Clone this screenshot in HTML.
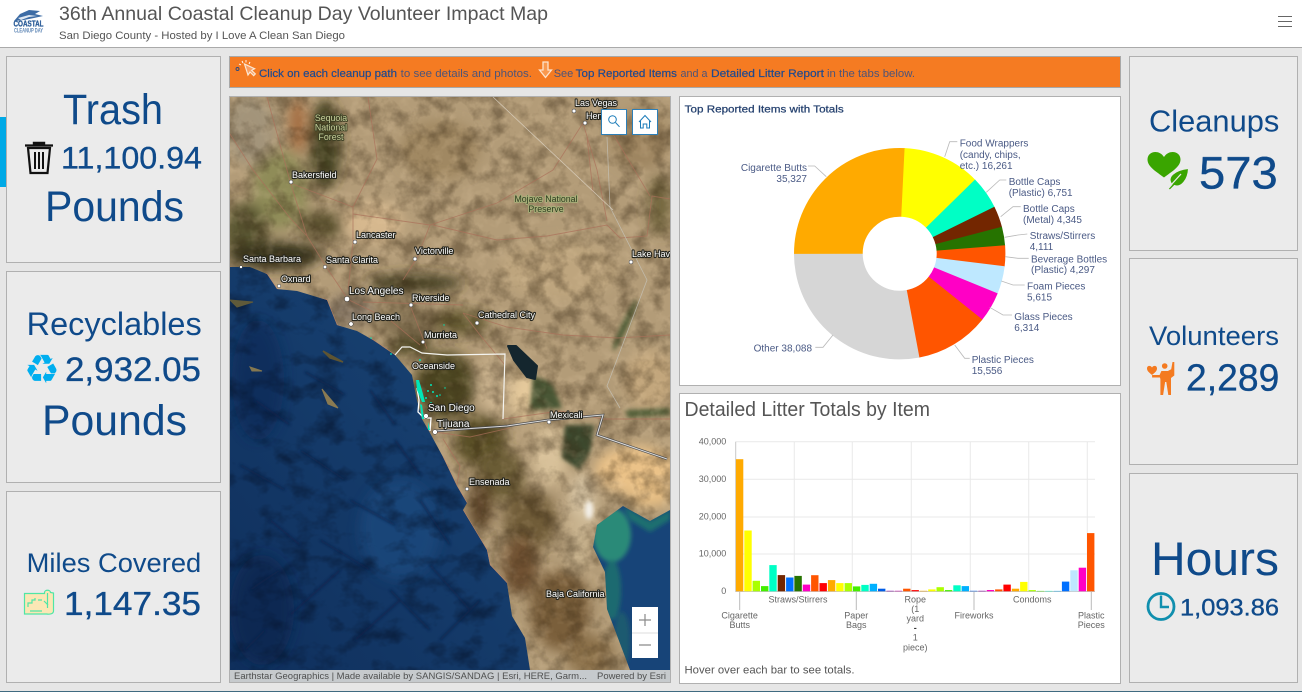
<!DOCTYPE html>
<html lang="en"><head><meta charset="utf-8"><title>36th Annual Coastal Cleanup Day Volunteer Impact Map</title>
<style>
html,body{margin:0;padding:0;width:1302px;height:692px;overflow:hidden;background:#e6e6e6;font-family:"Liberation Sans",sans-serif}
#root{position:relative;width:1302px;height:692px;overflow:hidden}
.a{position:absolute;box-sizing:border-box}
.p{background:#ebebeb;border:1px solid #b0b0b0}
.w{background:#fff;border:1px solid #b0b0b0}
svg{position:absolute;left:0;top:0;display:block;overflow:hidden}
.k{fill:#0f4a8a}
.n{fill:#0f4a8a;stroke:#0f4a8a;stroke-width:.35}
.l{font-size:10px;fill:#4a5a85}
.ax{font-size:9px;fill:#666}
.c{font-size:9px;fill:#fff;stroke:#26261e;stroke-width:2.2px;paint-order:stroke;stroke-linejoin:round}
.b{fill:#1f4a8f;font-size:11px;stroke:#1f4a8f;stroke-width:.2}
.r{fill:#4d5478;font-size:11px}
</style></head><body><div id="root">
<div class="a" style="left:0;top:0;width:1302px;height:48px;background:#fff;border-bottom:1px solid #aaa"></div>
<div class="a" style="left:0;top:117px;width:7px;height:70px;background:#00a9e6"></div>
<div class="a p" style="left:6px;top:56px;width:215px;height:207px"></div>
<div class="a p" style="left:6px;top:271px;width:215px;height:212px"></div>
<div class="a p" style="left:6px;top:491px;width:215px;height:192px"></div>
<div class="a p" style="left:1129px;top:56px;width:169px;height:195px"></div>
<div class="a p" style="left:1129px;top:258px;width:169px;height:207px"></div>
<div class="a p" style="left:1129px;top:473px;width:169px;height:210px"></div>
<div class="a" style="left:229px;top:56px;width:892px;height:32px;background:#f57b22;border:1px solid #a8a8a8"></div>
<div class="a w" style="left:229px;top:96px;width:442px;height:587px"></div>
<div class="a w" style="left:679px;top:96px;width:442px;height:290px"></div>
<div class="a w" style="left:679px;top:393px;width:442px;height:291px"></div>
<div class="a" style="left:0;top:691px;width:1302px;height:1px;background:#3f6a80"></div>

<svg width="1302" height="692" viewBox="0 0 1302 692" xmlns="http://www.w3.org/2000/svg" font-family="'Liberation Sans',sans-serif">
<defs>
<clipPath id="mc"><rect x="230" y="97" width="440" height="573"/></clipPath>
<filter id="bl" x="-30%" y="-30%" width="160%" height="160%"><feGaussianBlur stdDeviation="6"/></filter>
<filter id="bs" x="-30%" y="-30%" width="160%" height="160%"><feGaussianBlur stdDeviation="2"/></filter>
<filter id="bt" x="-10%" y="-10%" width="120%" height="120%"><feGaussianBlur stdDeviation="1.4"/></filter>
<filter id="nz" x="0" y="0" width="100%" height="100%" color-interpolation-filters="sRGB"><feTurbulence type="fractalNoise" baseFrequency=".055" numOctaves="4" seed="7"/><feColorMatrix values="0 0 0 0 .22 0 0 0 0 .16 0 0 0 0 .08 2.8 0 0 0 -1.15"/></filter>
<filter id="nf" x="0" y="0" width="100%" height="100%" color-interpolation-filters="sRGB"><feTurbulence type="fractalNoise" baseFrequency=".08" numOctaves="3" seed="3"/><feColorMatrix values="0 0 0 0 .95 0 0 0 0 .85 0 0 0 0 .7 0 2.6 0 0 -1.25"/></filter>
<filter id="no" x="0" y="0" width="100%" height="100%" color-interpolation-filters="sRGB"><feTurbulence type="fractalNoise" baseFrequency=".035 .045" numOctaves="4" seed="11"/><feColorMatrix values="0 0 0 0 .02 0 0 0 0 .07 0 0 0 0 .16 3 0 0 0 -1.45"/></filter>
<linearGradient id="oc" x1="1" y1="0" x2="0" y2="1"><stop offset="0" stop-color="#174473"/><stop offset=".5" stop-color="#174070"/><stop offset="1" stop-color="#0f2f5c"/></linearGradient>
<clipPath id="lc"><path d="M230 267L250 267 267 274 277 289 297 291 327 300 337 325 357 331 373 340 395 355 412 375 417 400 422 419 430 433 443 457 457 486 467 503 463 510 487 550 490 565 507 583 512 616 525 638 530 670 630 670 607 609 605 572 593 547 597 525 623 506 650 521 670 510 670 97 230 97Z"/></clipPath>
<clipPath id="gc"><path d="M670 510L650 521 623 506 597 525 593 547 605 572 607 609 630 670 670 670Z"/></clipPath>
</defs>

<!-- header -->
<g>
<path d="M14 21L20 14 29 10 40 11 35 14 43 16 34 18 24 20Z" fill="#3d6ca5"/>
<path d="M18 18L29 15 37 16 29 17 21 20Z" fill="#dfe8f2"/>
<text x="13.500" y="26.500" font-size="8" font-weight="bold" fill="#2a5c98" stroke="#2a5c98" stroke-width=".3" textLength="30" lengthAdjust="spacingAndGlyphs">COASTAL</text>
<text x="14" y="32.500" font-size="6" font-weight="bold" fill="#5f87b6" textLength="29" lengthAdjust="spacingAndGlyphs">CLEANUP DAY</text>
<text x="59" y="20" font-size="19.500" fill="#555" textLength="489" lengthAdjust="spacingAndGlyphs">36th Annual Coastal Cleanup Day Volunteer Impact Map</text>
<text x="59" y="39" font-size="11" fill="#555" textLength="286" lengthAdjust="spacingAndGlyphs">San Diego County - Hosted by I Love A Clean San Diego</text>
<path d="M1278 16.500h14M1278 21.500h14M1278 26.500h14" stroke="#666" stroke-width="1.100"/>
</g>

<!-- left KPIs -->
<text class="k" x="63" y="124" font-size="43" textLength="100" lengthAdjust="spacingAndGlyphs">Trash</text>
<text class="n" x="61" y="168.300" font-size="31.500" textLength="141" lengthAdjust="spacingAndGlyphs">11,100.94</text>
<text class="k" x="45" y="221" font-size="43" textLength="139" lengthAdjust="spacingAndGlyphs">Pounds</text>
<text class="k" x="26.700" y="335" font-size="32" textLength="175" lengthAdjust="spacingAndGlyphs">Recyclables</text>
<text class="n" x="65" y="381" font-size="34" textLength="136" lengthAdjust="spacingAndGlyphs">2,932.05</text>
<text class="k" x="42" y="435" font-size="43" textLength="145" lengthAdjust="spacingAndGlyphs">Pounds</text>
<text class="k" x="26.700" y="572" font-size="27" textLength="174.500" lengthAdjust="spacingAndGlyphs">Miles Covered</text>
<text class="n" x="64" y="615" font-size="33" textLength="137" lengthAdjust="spacingAndGlyphs">1,147.35</text>
<!-- trash icon -->
<g fill="none" stroke="#111">
<path d="M25 145.500h28" stroke-width="2.200"/><path d="M33.500 144.500v-2h11v2" fill="#111" stroke-width="1.400"/>
<path d="M28 148l2.500 25h17l2.500-25z" stroke-width="2.200"/>
<path d="M35 152v17M39 152v17M43 152v17" stroke-width="2"/>
</g>
<!-- recycle icon -->
<text x="24" y="383" font-size="40" fill="#00aeef" font-family="'DejaVu Sans',sans-serif">♻</text>
<!-- map icon -->
<g stroke="#4fe6a6" stroke-width="1.200" fill="#fbe7b5">
<path d="M24.500 593.500h20v-1c0-3 6-3 6 0l3 .5v18c0 3-4 3.500-7 3h-22z"/>
<path d="M28 607v-4h4v-3h3v-2M30 611h12M44 601l4 4M38 600h4" fill="none"/>
<path d="M47.500 593v15" fill="none"/>
</g>

<!-- banner -->
<g stroke="#fff" fill="none" stroke-width="1.200">
<path d="M244.500 64l3.500 11 2-3 3.700 3.600 1.600-1.700-3.700-3.500 3-1.700z" stroke="#fbe7d3" fill="#f9a066"/>
<path d="M242 61l1 2M246 60v2.500M239 64l2 1M250 62l-1 2" stroke-width=".9"/>
<circle cx="237.500" cy="69" r="1.500" stroke-width=".9" stroke="#2c4a80"/>
<path d="M543 62h5v8h3.500l-6 7.500-6-7.500h3.500z" stroke="#fde3cc" stroke-width="1.300" fill="#f9994f"/>
</g>
<text class="b" x="259" y="77" textLength="138" lengthAdjust="spacingAndGlyphs">Click on each cleanup path</text>
<text class="r" x="400.700" y="77" textLength="131.300" lengthAdjust="spacingAndGlyphs">to see details and photos.</text>
<text class="r" x="553.700" y="77">See</text>
<text class="b" x="575.700" y="77" textLength="101.300" lengthAdjust="spacingAndGlyphs">Top Reported Items</text>
<text class="r" x="680.500" y="77" textLength="27" lengthAdjust="spacingAndGlyphs">and a</text>
<text class="b" x="711" y="77" textLength="113" lengthAdjust="spacingAndGlyphs">Detailed Litter Report</text>
<text class="r" x="827" y="77" textLength="88" lengthAdjust="spacingAndGlyphs">in the tabs below.</text>

<!-- map -->
<g clip-path="url(#mc)">
<rect x="230" y="97" width="440" height="573" fill="url(#oc)"/>
<ellipse cx="262" cy="610" rx="32" ry="55" fill="#0c2850" opacity=".8" filter="url(#bl)"/>
<ellipse cx="258" cy="380" rx="26" ry="60" fill="#0d2c58" opacity=".7" filter="url(#bl)"/>
<ellipse cx="400" cy="530" rx="40" ry="50" fill="#1e4c80" opacity=".7" filter="url(#bl)"/>
<rect x="230" y="267" width="300" height="403" filter="url(#no)" opacity=".55"/>
<g fill="none" stroke="#08204a" stroke-width="2.400" filter="url(#bt)" opacity=".75">
<path d="M255 400L290 425M305 372L345 395M370 390L395 425M395 440L420 475M240 465L285 490M300 450L345 480M350 500L395 525M420 500L450 545M270 520L300 545M320 540L370 570M430 565L470 610M390 590L430 630M250 590L280 570M290 615L340 570M355 640L400 600M440 640L480 600M245 650L265 630"/>
</g>
<g clip-path="url(#gc)">
<rect x="590" y="500" width="80" height="170" fill="#174478"/>
<g filter="url(#bs)">
<ellipse cx="612" cy="535" rx="19" ry="27" fill="#2b8a78"/>
<ellipse cx="612" cy="590" rx="9" ry="30" fill="#1d6a70"/>
<ellipse cx="622" cy="640" rx="8" ry="28" fill="#1a5a70"/>
<path d="M623 506L650 521 670 510 670 520 650 532 630 520Z" fill="#1f7070"/>
</g>
</g>
<g clip-path="url(#lc)">
<rect x="230" y="97" width="440" height="573" fill="#b39c78"/>
<g filter="url(#bl)">
<ellipse cx="250" cy="130" rx="25" ry="35" fill="#a3947a"/>
<ellipse cx="280" cy="190" rx="28" ry="40" fill="#8f8c58"/>
<ellipse cx="298" cy="125" rx="9" ry="28" fill="#a56e42"/>
<ellipse cx="325" cy="145" rx="16" ry="45" fill="#454323"/>
<ellipse cx="245" cy="230" rx="22" ry="28" fill="#5a5733"/>
<ellipse cx="275" cy="255" rx="48" ry="14" fill="#39341a"/>
<ellipse cx="322" cy="225" rx="24" ry="14" fill="#5e5432"/>
<ellipse cx="373" cy="222" rx="30" ry="20" fill="#d6b88e"/>
<ellipse cx="415" cy="283" rx="48" ry="9" fill="#423c20"/>
<ellipse cx="350" cy="310" rx="24" ry="16" fill="#8a7a68"/>
<ellipse cx="405" cy="320" rx="36" ry="14" fill="#806e50"/>
<ellipse cx="460" cy="322" rx="28" ry="12" fill="#60562f"/>
<ellipse cx="445" cy="385" rx="30" ry="34" fill="#4e4622"/>
<ellipse cx="410" cy="345" rx="22" ry="10" fill="#4c4524"/>
<ellipse cx="495" cy="385" rx="14" ry="28" fill="#d2ba94"/>
<ellipse cx="525" cy="395" rx="14" ry="26" fill="#e6ca9c"/>
<ellipse cx="480" cy="440" rx="26" ry="26" fill="#5a5028"/>
<ellipse cx="500" cy="475" rx="24" ry="26" fill="#6a5b34"/>
<ellipse cx="530" cy="520" rx="26" ry="30" fill="#6f5c38"/>
<ellipse cx="480" cy="505" rx="12" ry="26" fill="#5e472b"/>
<ellipse cx="550" cy="455" rx="18" ry="30" fill="#d8c19a"/>
<ellipse cx="582" cy="505" rx="13" ry="32" fill="#dcc9a8"/>
<ellipse cx="578" cy="540" rx="12" ry="30" fill="#c9b48f"/>
<ellipse cx="520" cy="565" rx="18" ry="30" fill="#6f5130"/>
<ellipse cx="560" cy="610" rx="30" ry="40" fill="#7a5e3a"/>
<ellipse cx="590" cy="655" rx="24" ry="20" fill="#8a7048"/>
<ellipse cx="635" cy="470" rx="40" ry="24" fill="#ebc288"/>
<ellipse cx="650" cy="495" rx="22" ry="12" fill="#e8bf84"/>
<ellipse cx="650" cy="380" rx="26" ry="30" fill="#c2a67c"/>
<ellipse cx="660" cy="205" rx="12" ry="30" fill="#746840"/>
<ellipse cx="560" cy="270" rx="60" ry="30" fill="#bea57e"/>
<ellipse cx="440" cy="150" rx="40" ry="30" fill="#a08862"/>
<ellipse cx="640" cy="140" rx="30" ry="30" fill="#9e8560"/>
</g>
<g filter="url(#bs)">
<path d="M533 375L552 383 562 408 530 410Z" fill="#4a5735"/>
<path d="M565 425L595 425 590 452 580 470 562 458Z" fill="#3d4a2e"/>
<path d="M625 410L670 408 670 415 628 418Z" fill="#55603a"/>
<ellipse cx="625" cy="325" rx="3.500" ry="28" fill="#55603a" transform="rotate(25 625 325)"/>
</g>
<rect x="230" y="97" width="440" height="573" filter="url(#nz)" opacity=".4"/>
<rect x="230" y="97" width="440" height="573" filter="url(#nf)" opacity=".18"/>
<ellipse cx="589" cy="510" rx="4" ry="9" fill="#f4f1ea" filter="url(#bs)"/>
<g fill="none" stroke="#ab705a" stroke-width=".9" opacity=".7">
<path d="M267 97L290 181 307 236 325 265 347 298"/>
<path d="M290 183L353 207 353 243 348 291"/>
<path d="M353 214L430 225 497 203 553 170 583 123"/>
<path d="M430 225L417 258 403 280"/>
<path d="M433 225L497 240 547 236 607 225 620 238 647 236 652 196 670 199"/>
<path d="M583 123L597 170 607 221M613 134L650 196M587 137L593 192"/>
<path d="M463 313L507 327 563 335 617 338 670 335"/>
<path d="M363 302L463 305M410 305L427 349M345 298L390 320 420 345"/>
<path d="M503 419L560 411 603 419 670 419"/>
<path d="M443 439L460 466 457 484M435 432L470 437 510 428"/>
<path d="M230 134L253 170 290 218 307 236"/>
<path d="M368 97L377 159 353 207"/>
<path d="M463 313L480 335 505 365"/>
</g>
<path d="M607 137L610 207 647 280 607 386 620 408" fill="none" stroke="#c8c8c0" stroke-width=".8" opacity=".7"/>
<path d="M493 97L613 210" fill="none" stroke="#e4ddd0" stroke-width=".8" opacity=".7"/>
<path d="M230 267L267 274 277 289 327 300 337 325 373 340 395 355M443 457L457 486 467 503M463 510L487 550 490 565 507 583" fill="none" stroke="#c9836a" stroke-width="1.100" opacity=".7"/>
</g>
<path d="M508 346L516 346 537 366 535 379 527 377 514 360Z" fill="#14262e" stroke="#14262e" stroke-width="2" stroke-linejoin="round"/>
<path d="M230 300L253 302 237 307Z" fill="#5f5a3a" stroke="#5f5a3a" stroke-width="1"/>
<path d="M323 351L343 362 330 358Z" fill="#5f5532" stroke="#5f5532" stroke-width="1.500"/>
<path d="M250 367L262 371 252 371Z" fill="#857850" stroke="#857850" stroke-width="1"/>
<path d="M322 389L338 408 328 404Z" fill="#897a52" stroke="#897a52"/>
<path d="M395 355L402 347 410 347 422 353 447 355 505 354 503 419" fill="none" stroke="#f4f4f0" stroke-width="1.200"/>
<path d="M435 431L507 426 548 420 603 415 597 435 667 459" fill="none" stroke="#4a4a4a" stroke-width="2.400"/>
<path d="M435 431L507 426 548 420 603 415 597 435 667 459" fill="none" stroke="#d8d8d8" stroke-width="1.100"/>
<path d="M417 388L419 400 418 412 424 418 431 418 430 431" fill="none" stroke="#fff" stroke-width="1.300"/>
<g fill="#00e6b8">
<path d="M416 380l3 0 4 14 2 8-3 0-5-12zM420 404l2 1 2 14-2 0zM428 422l2 8-2 0z"/>
<circle cx="420" cy="360" r="1"/><circle cx="421" cy="364" r="1"/><circle cx="431" cy="385" r="1"/><circle cx="433" cy="392" r="1"/><circle cx="428" cy="391" r="1"/><circle cx="437" cy="396" r="1"/><circle cx="440" cy="395" r=".8"/><circle cx="426" cy="398" r="1"/><circle cx="431" cy="403" r="1"/><circle cx="371" cy="338" r=".8"/><circle cx="391" cy="354" r=".9"/><circle cx="444" cy="325" r=".7"/><circle cx="445" cy="388" r=".7"/>
</g>
<g fill="#fff" stroke="#333" stroke-width=".5">
<circle cx="574" cy="111" r="2"/><circle cx="585" cy="123" r="2"/><circle cx="291" cy="182" r="2"/><circle cx="355" cy="242" r="2"/><circle cx="415" cy="259" r="2"/><circle cx="325" cy="267" r="1.800"/><circle cx="241" cy="267" r="1.500"/><circle cx="279" cy="286" r="1.800"/><circle cx="347" cy="299" r="2.600"/><circle cx="411" cy="305" r="2"/><circle cx="351" cy="324" r="2.200"/><circle cx="477" cy="323" r="2"/><circle cx="423" cy="342" r="1.800"/><circle cx="631" cy="262" r="2"/><circle cx="426" cy="416" r="2.400"/><circle cx="435" cy="432" r="2.400"/><circle cx="549" cy="422" r="2"/><circle cx="467" cy="489" r="1.800"/>
</g>
<g text-anchor="middle" font-size="8.800" fill="#c9d29c" stroke="#3a3d22" stroke-width="1.800" paint-order="stroke" stroke-linejoin="round">
<text x="331" y="121">Sequoia</text><text x="331" y="130.500">National</text><text x="331" y="140">Forest</text>
</g>
<g text-anchor="middle" font-size="8.800" fill="#2f3a1f" stroke="#a8b27a" stroke-width="1.800" paint-order="stroke" stroke-linejoin="round">
<text x="546" y="202">Mojave National</text><text x="546" y="212">Preserve</text>
</g>
<text class="c" x="575" y="106">Las Vegas</text><text class="c" x="586" y="119">Hen</text>
<text class="c" x="292" y="178">Bakersfield</text><text class="c" x="356" y="238">Lancaster</text>
<text class="c" x="415" y="254">Victorville</text><text class="c" x="326" y="263">Santa Clarita</text>
<text class="c" x="243" y="262">Santa Barbara</text><text class="c" x="281" y="282">Oxnard</text>
<text class="c" x="349" y="294" style="font-size:10px">Los Angeles</text><text class="c" x="412" y="301">Riverside</text>
<text class="c" x="352" y="320">Long Beach</text><text class="c" x="478" y="318">Cathedral City</text>
<text class="c" x="424" y="338">Murrieta</text><text class="c" x="632" y="257">Lake Hava</text>
<text class="c" x="412" y="369">Oceanside</text><text class="c" x="428" y="411" style="font-size:10px">San Diego</text>
<text class="c" x="437" y="427" style="font-size:10px">Tijuana</text><text class="c" x="550" y="418">Mexicali</text>
<text class="c" x="469" y="485">Ensenada</text><text class="c" x="546" y="597">Baja California</text>
<g fill="#fff" stroke="#2d7fb8"><rect x="601.500" y="109.500" width="25" height="25"/><rect x="632.500" y="109.500" width="25" height="25"/></g>
<g fill="none" stroke="#1b7bb8" stroke-width="1">
<circle cx="612.500" cy="119.500" r="3.800"/><path d="M615.500 122.500l4 4.300"/>
<path d="M639 122l6-6.500 6 6.500M640.500 121v7h2.700v-4h3.600v4h2.700v-7"/>
</g>
<rect x="632" y="607" width="26" height="51" fill="#fff"/>
<path d="M632 633h26" stroke="#ddd"/>
<path d="M639 620h12M645 614v12M639 645h12" stroke="#8a8a8a" stroke-width="1.200"/>
</g>
<rect x="230" y="670" width="440" height="12" fill="#c6cacd"/>
<text x="234" y="679" font-size="9" fill="#4f5050" textLength="353" lengthAdjust="spacingAndGlyphs">Earthstar Geographics | Made available by SANGIS/SANDAG | Esri, HERE, Garm...</text>
<text x="597" y="679" font-size="9" fill="#4f5050" textLength="69" lengthAdjust="spacingAndGlyphs">Powered by Esri</text>

<!-- pie -->
<text x="684.700" y="112.300" font-size="10.500" fill="#24406e" stroke="#24406e" stroke-width=".25" textLength="159" lengthAdjust="spacingAndGlyphs">Top Reported Items with Totals</text>
<g fill="none" stroke-width="68.700">
<circle cx="899.700" cy="253.700" r="71.350" pathLength="360" stroke="#ffaa00" stroke-dasharray="93 267" transform="rotate(180 899.700 253.700)"/>
<circle cx="899.700" cy="253.700" r="71.350" pathLength="360" stroke="#ffff00" stroke-dasharray="42.800 317.200" transform="rotate(-87 899.700 253.700)"/>
<circle cx="899.700" cy="253.700" r="71.350" pathLength="360" stroke="#00ffc5" stroke-dasharray="18.200 341.800" transform="rotate(-44.200 899.700 253.700)"/>
<circle cx="899.700" cy="253.700" r="71.350" pathLength="360" stroke="#732600" stroke-dasharray="11.600 348.400" transform="rotate(-26 899.700 253.700)"/>
<circle cx="899.700" cy="253.700" r="71.350" pathLength="360" stroke="#267300" stroke-dasharray="10.200 349.800" transform="rotate(-14.400 899.700 253.700)"/>
<circle cx="899.700" cy="253.700" r="71.350" pathLength="360" stroke="#ff5500" stroke-dasharray="11.400 348.600" transform="rotate(-4.200 899.700 253.700)"/>
<circle cx="899.700" cy="253.700" r="71.350" pathLength="360" stroke="#bee8ff" stroke-dasharray="15.200 344.800" transform="rotate(7.200 899.700 253.700)"/>
<circle cx="899.700" cy="253.700" r="71.350" pathLength="360" stroke="#ff00c5" stroke-dasharray="16.500 343.500" transform="rotate(22.400 899.700 253.700)"/>
<circle cx="899.700" cy="253.700" r="71.350" pathLength="360" stroke="#ff5500" stroke-dasharray="40.700 319.300" transform="rotate(38.900 899.700 253.700)"/>
<circle cx="899.700" cy="253.700" r="71.350" pathLength="360" stroke="#d6d6d6" stroke-dasharray="100.400 259.600" transform="rotate(79.600 899.700 253.700)"/>
</g>
<g fill="none" stroke="#b9b9b9" stroke-width=".8">
<path d="M944.700 156.700L949.700 141.700H957.300M826.300 176.700L814.700 166H808M986.300 192.300L999.700 180H1006.300M1000.700 216.700L1013 206.700H1020.700M1004.700 237.300L1018 235 1027.300 234M1005.300 256.700L1018 258.300H1028.700M1001.300 281L1013 285H1024.700M989.700 307.300L1003 315H1012M954.700 345L964.700 358.300H969.700M833 335L823 347.300H815.300"/>
</g>
<text class="l" x="959.700" y="146.700">Food Wrappers</text><text class="l" x="959.700" y="158">(candy, chips,</text><text class="l" x="959.700" y="169">etc.) 16,261</text>
<text class="l" x="807" y="171" text-anchor="end">Cigarette Butts</text><text class="l" x="807" y="182" text-anchor="end">35,327</text>
<text class="l" x="1008.700" y="185">Bottle Caps</text><text class="l" x="1008.700" y="196">(Plastic) 6,751</text>
<text class="l" x="1023" y="212">Bottle Caps</text><text class="l" x="1023" y="223">(Metal) 4,345</text>
<text class="l" x="1029.700" y="239">Straws/Stirrers</text><text class="l" x="1029.700" y="250">4,111</text>
<text class="l" x="1031" y="262.700">Beverage Bottles</text><text class="l" x="1031" y="273">(Plastic) 4,297</text>
<text class="l" x="1027" y="289.700">Foam Pieces</text><text class="l" x="1027" y="300.700">5,615</text>
<text class="l" x="1014.300" y="320">Glass Pieces</text><text class="l" x="1014.300" y="331">6,314</text>
<text class="l" x="971.700" y="363">Plastic Pieces</text><text class="l" x="971.700" y="374">15,556</text>
<text class="l" x="812" y="351.700" text-anchor="end">Other 38,088</text>

<!-- bar chart -->
<text x="684.500" y="416" font-size="20" fill="#555" textLength="245.500" lengthAdjust="spacingAndGlyphs">Detailed Litter Totals by Item</text>
<text x="684.500" y="673.300" font-size="11" fill="#555" textLength="170" lengthAdjust="spacingAndGlyphs">Hover over each bar to see totals.</text>
<g stroke="#e9e9e9" stroke-width="1">
<path d="M735.700 441.700H1095M735.700 479.300H1095M735.700 517H1095M735.700 554H1095"/>
<path d="M794.300 441.700V591M852.300 441.700V591M911.300 441.700V591M970.300 441.700V591M1028.700 441.700V591M1087.300 441.700V591"/>
</g>
<path d="M735.700 441.700V591.500H1095" fill="none" stroke="#c8c8c8"/>
<path d="M739.700 592V610M856.300 592V610M974 592V610M1091.300 592V610" stroke="#bbb"/>
<g transform="translate(0 591.300) scale(1 -1)">
<rect x="735.900" width="7.400" height="132.100" fill="#ffaa00"/>
<rect x="744.300" width="7.400" height="60.800" fill="#ffff00"/>
<rect x="752.600" width="7.400" height="10.500" fill="#aaff00"/>
<rect x="761" width="7.400" height="5.200" fill="#44ee00"/>
<rect x="769.300" width="7.400" height="26.200" fill="#00ffc5"/>
<rect x="777.700" width="7.400" height="16.200" fill="#732600"/>
<rect x="786.100" width="7.400" height="13.800" fill="#0070ff"/>
<rect x="794.400" width="7.400" height="15.400" fill="#267300"/>
<rect x="802.800" width="7.400" height="6.700" fill="#ff00c5"/>
<rect x="811.100" width="7.400" height="16.100" fill="#ff5500"/>
<rect x="819.500" width="7.400" height="8.200" fill="#ff0000"/>
<rect x="827.900" width="7.400" height="11.200" fill="#ffaa00"/>
<rect x="836.200" width="7.400" height="8.200" fill="#ffff00"/>
<rect x="844.600" width="7.400" height="8.200" fill="#aaff00"/>
<rect x="852.900" width="7.400" height="4.900" fill="#44ee00"/>
<rect x="861.300" width="7.400" height="6.400" fill="#00ffc5"/>
<rect x="869.700" width="7.400" height="7.500" fill="#00b0ff"/>
<rect x="878" width="7.400" height="2.600" fill="#005ce6"/>
<rect x="886.400" width="7.400" height=".5" fill="#8400a8"/>
<rect x="894.700" width="7.400" height=".5" fill="#c500a8"/>
<rect x="903.100" width="7.400" height="2.600" fill="#ff5500"/>
<rect x="911.500" width="7.400" height="1.200" fill="#ff0000"/>
<rect x="919.800" width="7.400" height=".5" fill="#ffaa00"/>
<rect x="928.200" width="7.400" height="1.900" fill="#ffff00"/>
<rect x="936.500" width="7.400" height="4.100" fill="#aaff00"/>
<rect x="944.900" width="7.400" height="1.200" fill="#44ee00"/>
<rect x="953.300" width="7.400" height="6" fill="#00ffc5"/>
<rect x="961.600" width="7.400" height="5.200" fill="#00b0ff"/>
<rect x="970" width="7.400" height=".5" fill="#005ce6"/>
<rect x="978.300" width="7.400" height=".5" fill="#8400a8"/>
<rect x="986.700" width="7.400" height="1.300" fill="#ff00c5"/>
<rect x="995.100" width="7.400" height="1.900" fill="#ff5500"/>
<rect x="1003.400" width="7.400" height="6.700" fill="#ff0000"/>
<rect x="1011.800" width="7.400" height="2.600" fill="#ffaa00"/>
<rect x="1020.100" width="7.400" height="9.400" fill="#ffff00"/>
<rect x="1028.500" width="7.400" height="1.200" fill="#aaff00"/>
<rect x="1036.900" width="7.400" height=".4" fill="#44ee00"/>
<rect x="1045.200" width="7.400" height=".4" fill="#00ffc5"/>
<rect x="1053.600" width="7.400" height=".4" fill="#00b0ff"/>
<rect x="1061.900" width="7.400" height="9.700" fill="#0070ff"/>
<rect x="1070.300" width="7.400" height="21" fill="#bee8ff"/>
<rect x="1078.700" width="7.400" height="23.600" fill="#ff00c5"/>
<rect x="1087" width="7.400" height="58.200" fill="#ff5500"/>
</g>
<g text-anchor="end">
<text x="726.300" y="444.300" class="ax">40,000</text><text x="726.300" y="482" class="ax">30,000</text><text x="726.300" y="519.700" class="ax">20,000</text><text x="726.300" y="556.700" class="ax">10,000</text><text x="726.300" y="594" class="ax">0</text>
</g>
<g text-anchor="middle">
<text class="ax" x="739.700" y="618.300">Cigarette</text><text class="ax" x="739.700" y="628">Butts</text>
<text class="ax" x="798" y="602.300">Straws/Stirrers</text>
<text class="ax" x="856.300" y="618.300">Paper</text><text class="ax" x="856.300" y="628">Bags</text>
<text class="ax" x="915.300" y="602.300">Rope</text><text class="ax" x="915.300" y="612">(1</text><text class="ax" x="915.300" y="621.700">yard</text><text x="915.300" y="631" font-size="9" font-weight="bold" fill="#333">-</text><text class="ax" x="915.300" y="640.700">1</text><text class="ax" x="915.300" y="650.700">piece)</text>
<text class="ax" x="974" y="618.300">Fireworks</text>
<text class="ax" x="1032.300" y="602.300">Condoms</text>
<text class="ax" x="1091.300" y="618.300">Plastic</text><text class="ax" x="1091.300" y="628">Pieces</text>
</g>

<!-- right KPIs -->
<text class="k" x="1149" y="131.700" font-size="31" textLength="130.300" lengthAdjust="spacingAndGlyphs">Cleanups</text>
<text class="n" x="1199" y="188.300" font-size="45" textLength="78.700" lengthAdjust="spacingAndGlyphs">573</text>
<text class="k" x="1149" y="345" font-size="26.500" textLength="130" lengthAdjust="spacingAndGlyphs">Volunteers</text>
<text class="n" x="1186" y="390.700" font-size="38" textLength="93.300" lengthAdjust="spacingAndGlyphs">2,289</text>
<text class="k" x="1151" y="575" font-size="47" textLength="128" lengthAdjust="spacingAndGlyphs">Hours</text>
<text class="n" x="1180" y="615.700" font-size="24.500" textLength="99" lengthAdjust="spacingAndGlyphs">1,093.86</text>
<!-- heart leaf -->
<path d="M1164 177.500C1157 172 1147.500 167 1147.500 159.500 1147.500 151 1159 149 1164 157 1169 149 1180.500 151 1180.500 159.500 1180.500 167 1171 172 1164 177.500Z" fill="#3aa500"/>
<path d="M1168 189L1172 184.500C1166 177 1175 170 1188.500 168.500 1188 180 1181 188 1174.500 185.500L1170 190Z" fill="#3aa500" stroke="#ebebeb" stroke-width="1"/>
<path d="M1171 185L1181 174" stroke="#ebebeb" stroke-width="1.300"/>
<!-- volunteer -->
<g fill="#f47a20">
<path d="M1152 375c-2-2-5-3.500-5-6.500 0-3 3.500-3.500 5-1 1.500-2.500 5-2 5 1 0 3-3 4.500-5 6.500z"/>
<circle cx="1164.700" cy="366" r="2.800"/>
<path d="M1172.500 362h1.800v13.500l-3.300 2.500v17h-2.700l-2-13h-1.200l-2 13h-2.700v-16l-.5-1.500h-7.800v-2.500h7.500l1.800-4h6.500l3.300-1.800z"/>
</g>
<!-- clock -->
<g fill="none" stroke="#108fae">
<circle cx="1161" cy="606.500" r="13" stroke-width="2.800"/>
<path d="M1161 595.500v11.500h8" stroke-width="2.400"/>
</g>
</svg>
</div></body></html>
